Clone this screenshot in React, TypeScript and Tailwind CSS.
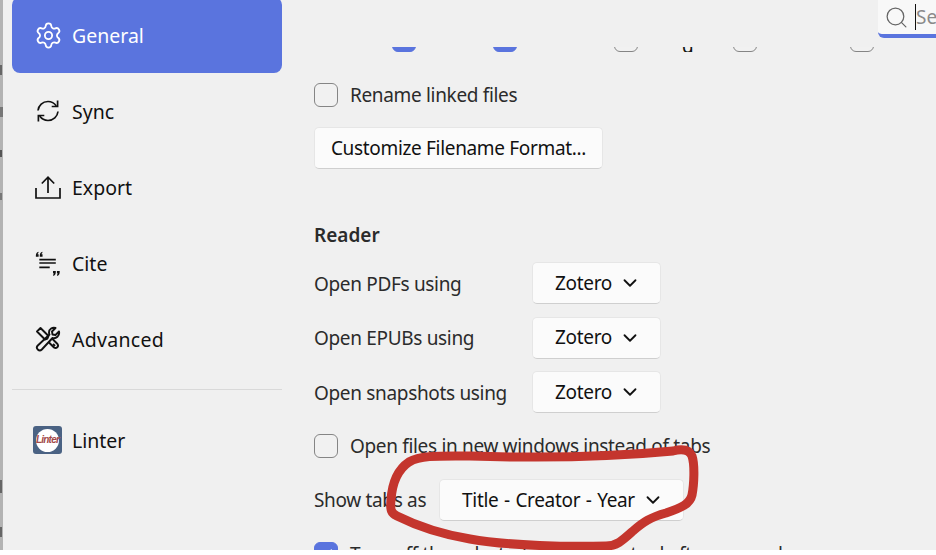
import { ChevronDown, Search, Settings, Check } from 'lucide-react';

const SyncIcon = () => (
  <svg width="26" height="26" viewBox="0 0 26 26" fill="none" stroke="#111" strokeWidth="1.7">
    <path d="M3 12.500C3.600 7.200 7.600 3.500 13 3.500c3.500 0 6.300 1.500 8.300 4.400" />
    <path d="M22.600 2.600v5.900h-5.900" />
    <path d="M23 13.500c-.6 5.300-4.600 9-10 9-3.500 0-6.300-1.500-8.300-4.400" />
    <path d="M3.400 23.400v-5.900h5.900" />
  </svg>
);

const ExportIcon = () => (
  <svg width="26" height="26" viewBox="0 0 26 26" fill="none" stroke="#111" strokeWidth="1.7">
    <path d="M1 14v10h24V14" />
    <path d="M13 19V3.500M6.800 9.500 13 3.200l6.200 6.300" />
  </svg>
);

const quoteMark = 'M1 6.300C1 4 2.200 2.600 4 2v1.600c-.6.3-1 .8-1 1.200h1.200v3H1z';

const CiteIcon = () => (
  <svg width="30" height="30" viewBox="0 0 30 30" fill="none">
    <path d="M5 11h19M5 15h19M5 20h12" stroke="#111" strokeWidth="2" />
    <path d={quoteMark} fill="#111" />
    <path d={quoteMark} fill="#111" transform="translate(4.500 0)" />
    <path d={quoteMark} fill="#111" transform="rotate(180 12.500 16)" />
    <path d={quoteMark} fill="#111" transform="rotate(180 14.750 16)" />
  </svg>
);

const ToolsIcon = () => (
  <svg width="26" height="26" viewBox="0 0 26 26" fill="none" stroke="#111" strokeWidth="1.900" strokeLinejoin="round">
    <path d="M2 5.500 5.500 2l8 8-1 2.500-2.500 1z" />
    <path d="M13.500 16 19 21.500a2.500 2.500 0 0 0 3.500-3.500L17 12.500" />
    <path d="M24 5.500 20.500 9 17.500 8.500 17 5.500 20.500 2c-3-1-6.500 1-6.500 4.500 0 1 .2 1.500.5 2L2.800 19.500a2.800 2.800 0 0 0 4 4L17.500 12c3.500 1 7.500-2 6.500-6.500z" />
    <path d="M18 18l2 2" />
  </svg>
);

const LinterIcon = () => (
  <div className="flex h-[28px] w-[29px] items-center justify-center rounded-[3px] bg-[#4a6283]">
    <div className="flex h-[23px] w-[23px] items-center justify-center rounded-full bg-white">
      <span className="text-[10px] font-bold italic leading-none tracking-[-0.8px] text-[#a34a4a] [font-family:'Liberation_Sans',sans-serif]">Linter</span>
    </div>
  </div>
);

const navItems = [
  { label: 'Sync', icon: <SyncIcon /> },
  { label: 'Export', icon: <ExportIcon /> },
  { label: 'Cite', icon: <CiteIcon /> },
  { label: 'Advanced', icon: <ToolsIcon /> },
];

const Box = ({ checked = false }: { checked?: boolean }) => (
  <div
    className={`flex h-[24px] w-[24px] shrink-0 items-center justify-center rounded-[6px] border-[1.5px] ${
      checked ? 'border-[#5a74de] bg-[#5a74de]' : 'border-[#858585] bg-[#f1f1f1]'
    }`}
  >
    {checked && <Check size={16} color="white" />}
  </div>
);

const Dropdown = ({ label, width }: { label: string; width: string }) => (
  <div
    className={`flex h-[42px] items-center justify-center gap-[7px] rounded-[5px] border border-[#e6e6e6] border-b-[#cfcfcf] bg-[#fbfbfb] pl-[3px] text-[#111] [word-spacing:1px] ${width}`}
  >
    <span>{label}</span>
    <ChevronDown size={22} strokeWidth={2} color="#111" />
  </div>
);

export default function App() {
  return (
    <div className="relative h-[555px] w-[936px] overflow-hidden bg-white text-[#2b2b2b] [font-family:'Noto_Sans',sans-serif]">
      <div className="flex h-[550px] border-l-[3px] border-[#b3b3b3] bg-[#f0f0f0]">
        {/* sidebar */}
        <aside className="mt-[-3px] w-[279px] shrink-0 pl-[9px] text-[19.5px]">
          <div className="flex h-[76px] w-[270px] items-center gap-[11px] rounded-[8px] bg-[#5a74de] pl-[23px] text-white">
            <div className="flex w-[26px] justify-center">
              <Settings size={29} strokeWidth={1.5} className="shrink-0" />
            </div>
            <span className="pt-[2px]">General</span>
          </div>
          {navItems.map((item) => (
            <div key={item.label} className="flex h-[76px] items-center gap-[11px] pl-[23px] text-[#111]">
              <div className="flex w-[26px] justify-center">{item.icon}</div>
              <span className={item.label === 'Advanced' ? 'pt-[2px] tracking-[0.3px]' : 'pt-[2px]'}>{item.label}</span>
            </div>
          ))}
          <div className="mt-[12px] h-px w-[270px] bg-[#d9d9d9]" />
          <div className="mt-[25px] flex h-[50px] items-center gap-[10px] pl-[21px] text-[#111]">
            <LinterIcon />
            <span className="pt-[2px]">Linter</span>
          </div>
        </aside>

        {/* preferences */}
        <main className="flex-1 pl-[32px] text-[19px] tracking-[-0.33px]">
          <div className="mt-[47px] flex h-[5px] items-end overflow-hidden pl-[78px]">
            <div className="mr-[77px]"><Box checked /></div>
            <div className="mr-[97px]"><Box checked /></div>
            <div className="mr-[44px]"><Box /></div>
            <span className="mr-[41px] w-[10px] translate-y-[4px] text-[#111] leading-[20px]">g</span>
            <div className="mr-[93px]"><Box /></div>
            <Box />
          </div>

          <div className="mt-[31px] flex h-[24px] items-center gap-[12px]">
            <Box />
            <span>Rename linked files</span>
          </div>
          <div className="mt-[20px] flex h-[42px] w-[289px] items-center justify-center rounded-[5px] border border-[#e6e6e6] border-b-[#cfcfcf] bg-[#fbfbfb] text-[#111]">
            Customize Filename Format...
          </div>

          <h2 className="mt-[52px] h-[28px] font-semibold leading-[28px] tracking-normal">Reader</h2>

          <div className="mt-[13px] flex flex-col gap-[12.5px]">
            {['Open PDFs using', 'Open EPUBs using', 'Open snapshots using'].map((label) => (
              <div key={label} className="flex items-center">
                <span className="w-[218px] pt-[2px]">{label}</span>
                <Dropdown label="Zotero" width="w-[129px]" />
              </div>
            ))}
          </div>

          <div className="mt-[21px] flex h-[24px] items-center gap-[12px]">
            <Box />
            <span>Open files in new windows instead of tabs</span>
          </div>

          <div className="mt-[21px] flex items-center">
            <span className="w-[125px]">Show tabs as</span>
            <Dropdown label="Title - Creator - Year" width="w-[245px]" />
          </div>

          <div className="mt-[21px] flex h-[24px] items-start gap-[12px] whitespace-nowrap">
            <Box checked />
            <span className="-mt-[2px]">Turn off the selected annotation tool after use and</span>
          </div>
        </main>
      </div>

      {/* bits of the window behind, at the left edge */}
      <div className="absolute left-0 top-[65px] h-[10px] w-[2px] bg-[#666]" />
      <div className="absolute left-0 top-[107px] h-[10px] w-[3px] bg-[#777]" />
      <div className="absolute left-0 top-[150px] h-[7px] w-[2px] bg-[#555]" />
      <div className="absolute left-0 top-[193px] h-[7px] w-[2px] bg-[#777]" />
      <div className="absolute left-0 top-[480px] h-[13px] w-[2px] bg-[#666]" />
      <div className="absolute left-0 top-[527px] h-[10px] w-[2px] bg-[#666]" />

      {/* search box clipped at the window edge */}
      <div className="absolute left-[878px] top-0 flex h-[38px] w-[58px] items-center gap-[6px] overflow-hidden rounded-bl-[6px] border-b-[4px] border-[#5a74de] bg-[#f8f8f8] pl-[6px] text-[19px] text-[#8a8a8a]">
        <Search size={25} strokeWidth={1.2} color="#666" className="shrink-0" />
        <span className="border-l border-[#111] leading-[26px]">Se</span>
      </div>

      {/* hand drawn marker */}
      <svg className="absolute left-0 top-0 pointer-events-none" width="936" height="555" viewBox="0 0 936 555" fill="none">
        <path
          d="M673 451C681 449 689 449 692 456C695 465 694 485 692 495C690 504 681 508 666 513C651 517 643 522 633 531C623 540 617 546 606 546C570 547 510 546 470 539C440 534 415 525 397 516C391 513 390 510 391 500C392 485 397 470 409 462C421 455 440 456 470 456C530 458 600 458 673 451Z"
          stroke="#c4352d"
          strokeWidth="9"
          strokeLinejoin="round"
        />
      </svg>
      <div className="absolute bottom-0 left-0 h-[5px] w-full bg-white" />
    </div>
  );
}
